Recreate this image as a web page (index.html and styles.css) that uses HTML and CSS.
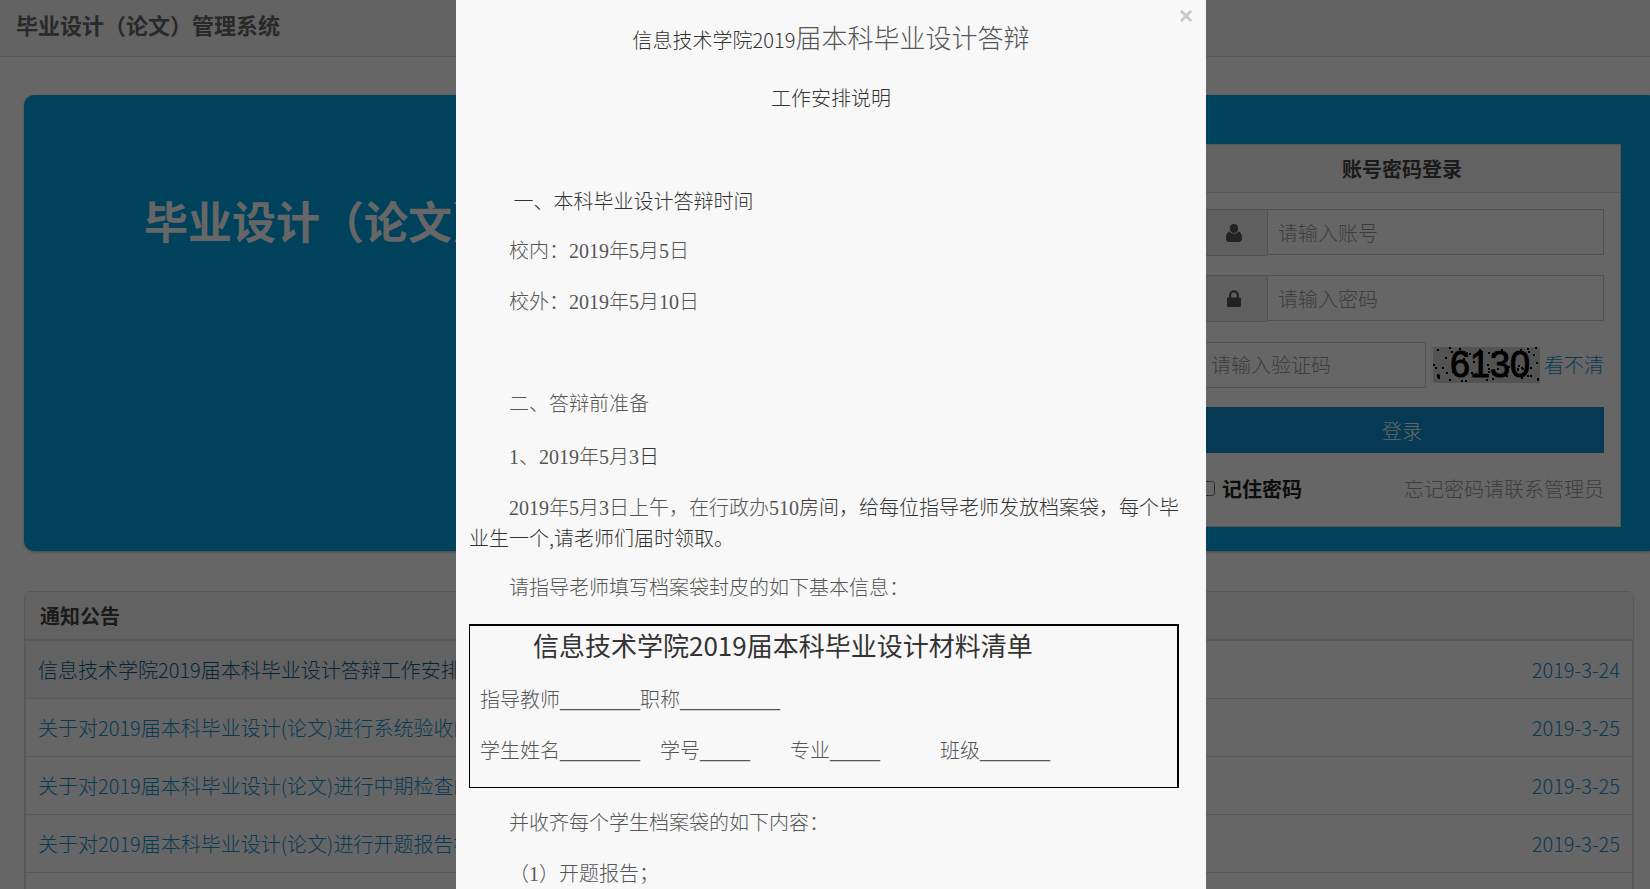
FILE: index.html
```
<!DOCTYPE html>
<html lang="zh-CN">
<head>
  <meta charset="UTF-8">
  <meta name="viewport" content="width=device-width, initial-scale=1">
  <title>毕业设计（论文）管理系统</title>
  <link rel="stylesheet" href="styles.css">
</head>
<body>

<header class="topbar">
  <h1>毕业设计（论文）管理系统</h1>
</header>

<main class="page">
  <!-- 横幅与登录框 -->
  <section class="banner">
    <h2 class="banner-title">毕业设计（论文）管理系统</h2>
    <form class="login">
      <h3 class="login-title">账号密码登录</h3>
      <div class="login-body">
        <div class="input-group">
          <label class="input-icon" for="account" aria-label="账号">
            <svg width="16" height="18" viewBox="0 0 16 18"><ellipse cx="8" cy="4.5" rx="4.2" ry="4.5"/><path d="M3.6 7.6C1 8.200 0 11 0 14.500C0 16.700 1.300 18 3.200 18H12.800C14.700 18 16 16.700 16 14.500C16 11 15 8.200 12.400 7.600C11.300 9 9.800 9.800 8 9.800S4.700 9 3.600 7.600Z"/></svg>
          </label>
          <input type="text" id="account" placeholder="请输入账号">
        </div>
        <div class="input-group">
          <label class="input-icon" for="password" aria-label="密码">
            <svg width="14" height="17" viewBox="0 0 14 17"><path fill-rule="evenodd" d="M2 7.500V5.200a5 5 0 0 1 10 0V7.500h.8c.7 0 1.200.5 1.200 1.200v7.100c0 .7-.5 1.200-1.200 1.200H1.200C.5 17 0 16.500 0 15.800V8.700C0 8 .5 7.500 1.200 7.500ZM4.300 7.500H9.700V5.200a2.700 2.700 0 0 0-5.400 0Z"/></svg>
          </label>
          <input type="password" id="password" placeholder="请输入密码">
        </div>
        <div class="captcha-row">
          <input type="text" placeholder="请输入验证码" aria-label="验证码">
          <svg class="captcha" width="107" height="36" viewBox="0 0 107 36">
            <rect width="107" height="36" fill="#cfcfcf"/>
            <text x="17" y="30">6130</text>
            <path id="noise" fill="none" stroke="#000" stroke-width="2"/>
          </svg>
          <a href="#">看不清</a>
        </div>
        <button type="submit" class="btn-login">登录</button>
        <div class="login-foot">
          <label><input type="checkbox"> 记住密码</label>
          <span>忘记密码请联系管理员</span>
        </div>
      </div>
    </form>
  </section>

  <!-- 通知公告 -->
  <section class="notice">
    <h3 class="notice-title">通知公告</h3>
    <ul class="notice-list">
      <li class="active"><a href="#">信息技术学院2019届本科毕业设计答辩工作安排说明</a><a class="date" href="#">2019-3-24</a></li>
      <li><a href="#">关于对2019届本科毕业设计(论文)进行系统验收的通知</a><a class="date" href="#">2019-3-25</a></li>
      <li><a href="#">关于对2019届本科毕业设计(论文)进行中期检查的通知</a><a class="date" href="#">2019-3-25</a></li>
      <li><a href="#">关于对2019届本科毕业设计(论文)进行开题报告检查的通知</a><a class="date" href="#">2019-3-25</a></li>
      <li></li>
    </ul>
  </section>
</main>

<!-- 公告弹窗 -->
<div class="dimmer">
  <article class="popup" role="dialog">
    <button type="button" class="close" aria-label="关闭">&times;</button>
    <p class="center heading">信息技术学院2019<span class="song big">届本科毕业设计答辩</span></p>
    <p class="center">工作安排说明</p>
    <p>&nbsp;</p>
    <p>&nbsp;一、本科毕业设计答辩时间</p>
    <p class="song">校内：2019年5月5日</p>
    <p class="song">校外：2019年5月10日</p>
    <p>&nbsp;</p>
    <p class="song">二、答辩前准备</p>
    <p><span class="song">1、2019年5月3</span>日</p>
    <p><span class="song">2019年5月3日上午，在行政办510</span>房间，给每位指导老师发放档案袋，每个毕业生一个,请老师们届时领取。</p>
    <p class="song">请指导老师填写档案袋封皮的如下基本信息：</p>
    <div class="form-box">
      <p class="big">信息技术学院2019届本科毕业设计材料清单</p>
      <p class="song">指导教师________职称__________</p>
      <p class="song">学生姓名________　学号_____　　专业_____　　　班级_______</p>
    </div>
    <p class="song">并收齐每个学生档案袋的如下内容：</p>
    <p class="song">（1）开题报告；</p>
  </article>
</div>

<script>
  // 验证码噪点
  var seed = 7, d = "";
  function rnd(n) {
    seed = (seed * 1103 + 377) % 65521;
    return seed % n;
  }
  for (var i = 0; i < 60; i++) {
    d += "M" + rnd(105) + " " + (1 + rnd(34)) + "h2";
  }
  document.getElementById("noise").setAttribute("d", d);
</script>

</body>
</html>
```
FILE: styles.css
```
* {
  box-sizing: border-box;
}
body {
  margin: 0;
  overflow: hidden;
  background: #fff;
  color: #333;
  font-family: "Noto Sans CJK SC", sans-serif;
  font-size: 20px;
  font-weight: 300;
  line-height: 31px;
}
h1, h2, h3, p, ul {
  margin: 0;
  padding: 0;
}
a {
  color: #0e90d2;
  text-decoration: none;
}
input, button {
  font: inherit;
}
.topbar {
  height: 57px;
  padding: 9px 16px;
  background: #f8f8f8;
  border-bottom: 1px solid #ddd;
}
.topbar h1 {
  font-size: 22px;
  color: #666;
}
.page {
  padding: 38px 16px 0 24px;
}
.banner {
  display: flex;
  justify-content: space-between;
  align-items: flex-start;
  height: 456px;
  margin: 0 -24px 40px 0;
  padding: 49px 37px 0 120px;
  background: #00a5e6;
  border-radius: 10px;
  box-shadow: 0 1px 3px rgba(0, 0, 0, 0.3);
}
.banner-title {
  margin-top: 44px;
  color: #fff;
  font-size: 44px;
  line-height: 64px;
}
.login {
  width: 438px;
  background: #fff;
  border: 1px solid #ddd;
}
.login-title {
  height: 48px;
  line-height: 47px;
  font-size: 20px;
  text-align: center;
  color: #444;
  background: #f5f5f5;
  border-bottom: 1px solid #ddd;
}
.login-body {
  padding: 16px 16px 22px;
}
.input-group {
  display: flex;
  height: 47px;
  margin-bottom: 19px;
}
.input-icon {
  display: flex;
  align-items: center;
  justify-content: center;
  width: 67px;
  background: #eee;
  border: 1px solid #ccc;
  border-right: none;
  fill: #555;
}
.login input[type="text"],
.login input[type="password"] {
  flex: 1;
  min-width: 0;
  height: 46px;
  padding: 0 10px;
  border: 1px solid #ccc;
  background: #fff;
  outline: none;
}
.login input::placeholder {
  color: #999;
}
.captcha-row {
  display: flex;
  align-items: center;
  height: 47px;
  margin-bottom: 19px;
}
.captcha {
  margin: 0 4px 0 7px;
}
.captcha text {
  font-family: "Liberation Sans", sans-serif;
  font-size: 36px;
  font-weight: normal;
  stroke: #000;
  stroke-width: 1px;
}
.btn-login {
  display: block;
  width: 100%;
  height: 46px;
  border: none;
  background: #0e90d2;
  color: #fff;
}
.login-foot {
  display: flex;
  justify-content: space-between;
  margin-top: 20px;
  color: #999;
}
.login-foot label {
  display: flex;
  align-items: center;
  gap: 7px;
  color: #222;
  font-weight: bold;
}
.login-foot input {
  width: 15px;
  height: 15px;
  margin: 0;
}
.notice {
  border: 1px solid #ddd;
  border-radius: 6px 6px 0 0;
}
.notice-title {
  height: 48px;
  padding: 0 15px;
  line-height: 47px;
  font-size: 20px;
  color: #444;
  background: #f5f5f5;
  border-bottom: 1px solid #ddd;
}
.notice-list {
  list-style: none;
  border: 1px solid #ddd;
}
.notice-list li {
  display: flex;
  justify-content: space-between;
  height: 58px;
  line-height: 58px;
  border-bottom: 1px solid #ddd;
}
.notice-list a {
  padding: 0 12px;
}
.notice-list .active a:first-child {
  flex: 0 1 50%;
  height: 57px;
  background: #f5f5f5;
  color: #095f8a;
}
/* 右侧多出的部分用于补偿滚动条宽度 */
.dimmer {
  position: fixed;
  inset: 0 -12px 0 0;
  background: rgba(0, 0, 0, 0.6);
}
.popup {
  position: relative;
  max-width: 750px;
  height: 100%;
  margin: 0 auto;
  padding: 19px 13px;
  overflow: hidden;
  background: #f8f8f8;
}
.popup p {
  margin-bottom: 20px;
  text-indent: 40px;
}
.popup .center {
  margin-bottom: 21px;
  text-align: center;
  text-indent: 0;
}
.popup .heading {
  line-height: 42px;
}
.song {
  font-family: "Liberation Serif", "Noto Sans CJK SC", serif;
  font-weight: 300;
  color: #555;
}
span.song {
  line-height: 0;
}
.big {
  font-size: 26px;
}
.close {
  position: absolute;
  top: 0;
  right: 13px;
  padding: 0;
  border: none;
  background: none;
  color: #c8c8c8;
  font-family: "Liberation Sans", sans-serif;
  font-size: 24px;
  font-weight: bold;
}
.form-box {
  max-width: 710px;
  margin-bottom: 20px;
  padding: 1px 10px 0;
  border: 1px solid #000;
  border-top-width: 2px;
  border-right-width: 2px;
}
.form-box p {
  text-indent: 0;
}
.form-box .big {
  margin-bottom: 22px;
  font-weight: normal;
  line-height: 36px;
  text-indent: 53px;
}
```
